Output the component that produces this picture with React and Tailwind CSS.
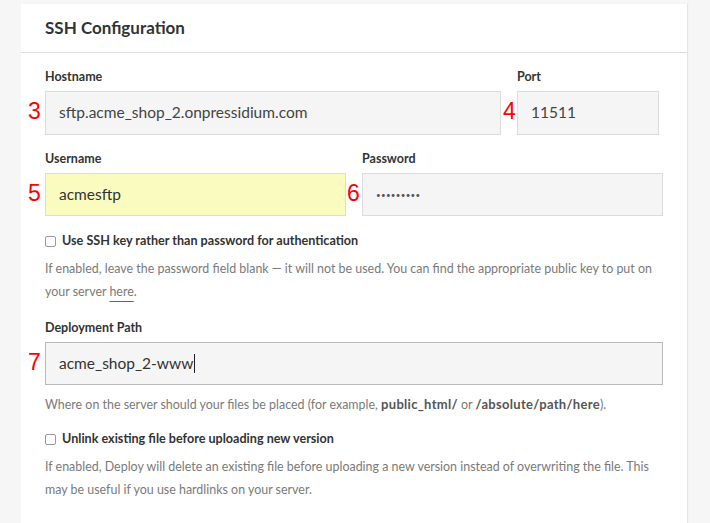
import React from "react";

function Mark({ n, left = "left-[-18px]" }) {
  return (
    <span
      className={`absolute ${left} top-[8px] text-[23px] leading-none text-[#ff0000] font-[family-name:'Liberation_Sans',sans-serif]`}
    >
      {n}
    </span>
  );
}

function Label({ children }) {
  return (
    <div className="text-[12.5px] font-bold text-[#333333] leading-[16px] mb-[6px]">
      {children}
    </div>
  );
}

function Check({ children }) {
  return (
    <label className="flex items-center gap-[6px] h-[20px] text-[12.6px] font-bold text-[#333333]">
      <span className="w-[11px] h-[11px] rounded-[2px] border border-[#9a9a9a] bg-white shrink-0" />
      <span>{children}</span>
    </label>
  );
}

export default function App() {
  return (
    <div className="min-h-screen bg-[#f6f6f6] pt-[4px] pl-[21px] pr-[23px] font-[family-name:Lato,sans-serif]">
      <div className="bg-white min-h-[519px] shadow-[1px_0_1px_rgba(0,0,0,0.07)]">
        <div className="h-[49px] flex items-center px-6 border-b border-[#dddddd]">
          <h2 className="text-[17px] font-bold text-[#333333]">SSH Configuration</h2>
        </div>
        <div className="px-6 pt-4 pb-6">
          <div className="flex gap-4">
            <div className="w-[456px]">
              <Label>Hostname</Label>
              <div className="relative h-[44px] border border-[#dcdcdc] bg-[#f5f5f5] flex items-center px-[13px] text-[15.5px] text-[#444444]">
                <Mark n="3" />
                sftp.acme_shop_2.onpressidium.com
              </div>
            </div>
            <div className="w-[142px]">
              <Label>Port</Label>
              <div className="relative h-[44px] border border-[#dcdcdc] bg-[#f5f5f5] flex items-center px-[13px] text-[15.5px] text-[#444444]">
                <Mark n="4" left="left-[-15px]" />
                11511
              </div>
            </div>
          </div>

          <div className="grid grid-cols-2 gap-4 mt-4">
            <div>
              <Label>Username</Label>
              <div className="relative h-[43px] border border-[#dcdcdc] bg-[#fafcbf] flex items-center px-[13px] text-[15.5px] text-[#333333]">
                <Mark n="5" />
                acmesftp
              </div>
            </div>
            <div>
              <Label>Password</Label>
              <div className="relative h-[43px] border border-[#dcdcdc] bg-[#f5f5f5] flex items-center px-[13px] text-[8px] tracking-[0.3px] text-[#555555]">
                <Mark n="6" left="left-[-16px]" />
                •••••••••
              </div>
            </div>
          </div>

          <div className="mt-[15px]">
            <Check>Use SSH key rather than password for authentication</Check>
          </div>
          <p className="mt-[6px] text-[12.45px] leading-[23px] text-[#7a7a7a]">
            If enabled, leave the password field blank — it will not be used. You can find the appropriate public key to put on
            <br />
            your server{" "}
            <span className="underline decoration-[#666666] underline-offset-[5px]">here</span>.
          </p>

          <div className="mt-[17px]">
            <Label>Deployment Path</Label>
            <div className="relative h-[43px] border border-[#b9b9b9] bg-[#f5f5f5] flex items-center px-[13px] text-[15.5px] text-[#333333]">
              <Mark n="7" />
              acme_shop_2-www
              <span className="inline-block w-px h-[19px] bg-[#222222] ml-[1px]" />
            </div>
          </div>
          <p className="mt-[8px] text-[12.45px] leading-[23px] text-[#7a7a7a]">
            Where on the server should your files be placed (for example,{" "}
            <b className="text-[#555555] text-[13px] tracking-[0.3px]">public_html/</b> or{" "}
            <b className="text-[#555555] text-[13px] tracking-[0.3px]">/absolute/path/here</b>).
          </p>

          <div className="mt-[13px]">
            <Check>Unlink existing file before uploading new version</Check>
          </div>
          <p className="mt-[6px] text-[12.45px] leading-[23px] text-[#7a7a7a]">
            If enabled, Deploy will delete an existing file before uploading a new version instead of overwriting the file. This
            <br />
            may be useful if you use hardlinks on your server.
          </p>
        </div>
      </div>
    </div>
  );
}
